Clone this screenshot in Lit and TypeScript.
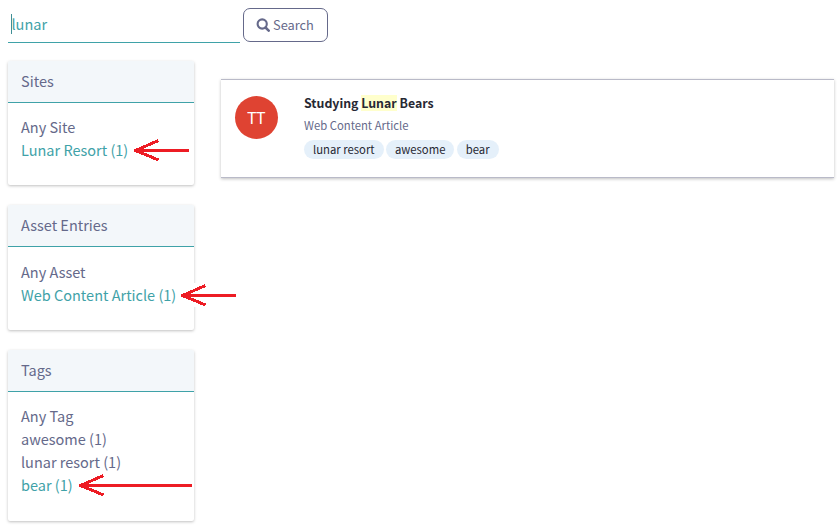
import { LitElement, html, css, svg } from "lit";
import { customElement, property } from "lit/decorators.js";
import { styleMap } from "lit/directives/style-map.js";

interface Term {
  label: string;
  selected?: boolean;
  arrow?: { length: number; gap: number };
}

const FACETS: { title: string; terms: Term[] }[] = [
  {
    title: "Sites",
    terms: [{ label: "Any Site" }, { label: "Lunar Resort (1)", selected: true, arrow: { length: 55, gap: 5.6 } }],
  },
  {
    title: "Asset Entries",
    terms: [{ label: "Any Asset" }, { label: "Web Content Article (1)", selected: true, arrow: { length: 55, gap: 4.9 } }],
  },
  {
    title: "Tags",
    terms: [
      { label: "Any Tag" },
      { label: "awesome (1)" },
      { label: "lunar resort (1)" },
      { label: "bear (1)", selected: true, arrow: { length: 113, gap: 6.4 } },
    ],
  },
];

@customElement("pointer-arrow")
class PointerArrow extends LitElement {
  @property({ type: Number }) length = 55;

  static styles = css`
    :host { display: block; }
    svg { display: block; }
    path { fill: none; stroke: #ed1c24; stroke-width: 3; }
  `;

  render() {
    return html`<svg width=${this.length} height="24" shape-rendering="crispEdges">
      ${svg`<path d="M1 12.5H${this.length}M24.5 2.5L1.5 12.5L24.5 22" />`}
    </svg>`;
  }
}

@customElement("facet-panel")
class FacetPanel extends LitElement {
  @property() heading = "";
  @property({ attribute: false }) terms: Term[] = [];

  static styles = css`
    :host {
      display: block;
      background: #fff;
      border-radius: 2px;
      box-shadow: 0 1px 3px rgba(0, 0, 0, 0.25);
    }
    .heading {
      box-sizing: border-box;
      height: 42px;
      padding-left: 13px;
      line-height: 40px;
      background: #f3f7fa;
      border-bottom: 1px solid #3fa2a8;
      border-radius: 2px 2px 0 0;
    }
    .terms { padding: 13.65px 0 23.1px 13px; }
    .term { height: 23.05px; line-height: 22px; display: flex; white-space: nowrap; }
    .label { position: relative; }
    .selected { color: #3fa2a8; }
    pointer-arrow { position: absolute; left: 100%; top: -1px; background: #fff; }
  `;

  render() {
    return html`
      <div class="heading">${this.heading}</div>
      <div class="terms">
        ${this.terms.map(
          (t) => html`<div class="term">
            <span class="label ${t.selected ? "selected" : ""}"
              >${t.label}${t.arrow
                ? html`<pointer-arrow
                    style=${styleMap({ marginLeft: `${t.arrow.gap}px` })}
                    .length=${t.arrow.length}
                  ></pointer-arrow>`
                : ""}</span
            >
          </div>`
        )}
      </div>
    `;
  }
}

@customElement("app-root")
class AppRoot extends LitElement {
  static styles = css`
    :host {
      display: block;
      box-sizing: border-box;
      height: 529px;
      padding: 8px 5px 0 8px;
      overflow: hidden;
      background: #fff;
      color: #65698a;
      font: 14.5px "Noto Sans CJK SC", "Open Sans", sans-serif;
    }
    .bar { display: flex; gap: 3px; height: 35px; }
    .field {
      box-sizing: border-box;
      width: 232px;
      border-bottom: 1px solid #3fa2a8;
      color: #3fa2a8;
      padding: 6px 0 0 3px;
      display: flex;
    }
    .caret { width: 1px; height: 20px; background: #3f8f96; }
    .query { line-height: 20px; margin-left: -0.5px; }
    .search {
      box-sizing: border-box;
      width: 85px;
      height: 34px;
      border: 1px solid #65698a;
      border-radius: 7px;
      display: flex;
      align-items: center;
      padding: 0 0 0 12px;
      gap: 3px;
      font: 12.8px/32px "Noto Sans CJK SC", sans-serif;
      color: #65698a;
      background: #fff;
    }
    .search svg { flex: none; }
    .columns { display: flex; gap: 27px; padding-top: 17.6px; align-items: flex-start; }
    .facets { width: 186px; display: grid; gap: 19.7px; }
    .card {
      box-sizing: border-box;
      flex: 1;
      height: 99px;
      margin-top: 18.4px;
      padding: 16px 14px;
      display: flex;
      gap: 26px;
      border: solid #b9bac8;
      border-width: 1px 0;
      box-shadow: 0 1px 3px rgba(0, 0, 0, 0.25);
    }
    .avatar {
      width: 43px;
      height: 43px;
      border-radius: 50%;
      background: #df4332;
      color: #fff;
      font-size: 16px;
      line-height: 43px;
      text-align: center;
      letter-spacing: -0.5px;
      text-indent: -1px;
    }
    .info { font-size: 11.3px; }
    .title { font-size: 12.35px; font-weight: 700; color: #272833; line-height: 16px; height: 16px; margin-top: -1px; }
    mark { background: #ffc; color: inherit; display: inline-block; height: 16px; }
    .type { line-height: 16px; height: 16px; margin-top: 6px; }
    .tags { display: flex; gap: 2.4px; margin-top: 7px; }
    .tag {
      height: 19px;
      line-height: 19px;
      padding: 0 9px;
      border-radius: 10px;
      background: #e5f0fa;
      color: #272833;
    }
  `;

  render() {
    return html`
      <div class="bar">
        <div class="field"><span class="caret"></span><span class="query">lunar</span></div>
        <button class="search">
          <svg width="14" height="14" viewBox="0 0 14 14" fill="none" stroke="#65698a">
            <circle cx="6.2" cy="6" r="4.6" stroke-width="2.1" />
            <path d="M9.5 9.5L12.7 12.7" stroke-width="2.5" stroke-linecap="round" />
          </svg>
          <span>Search</span>
        </button>
      </div>
      <div class="columns">
        <div class="facets">
          ${FACETS.map((f) => html`<facet-panel .heading=${f.title} .terms=${f.terms}></facet-panel>`)}
        </div>
        <div class="card">
          <div class="avatar">TT</div>
          <div class="info">
            <div class="title">Studying <mark>Lunar</mark> Bears</div>
            <div class="type">Web Content Article</div>
            <div class="tags">
              ${["lunar resort", "awesome", "bear"].map((t) => html`<span class="tag">${t}</span>`)}
            </div>
          </div>
        </div>
      </div>
    `;
  }
}
